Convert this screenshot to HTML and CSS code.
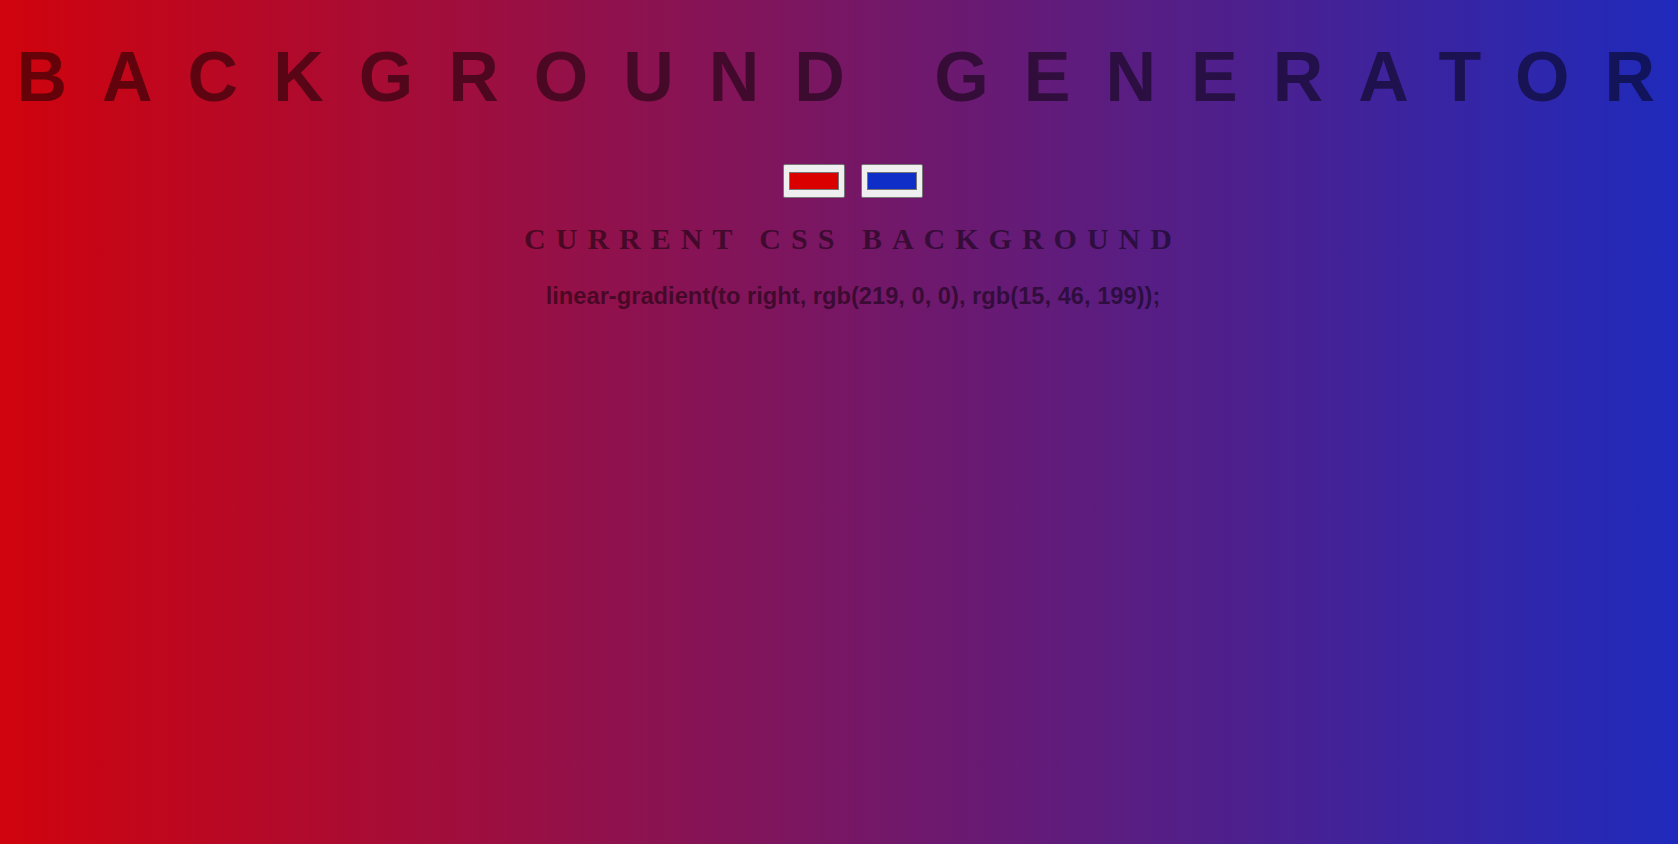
FILE: index.html
```html
<!DOCTYPE html>
<html lang="en">
<head>
<meta charset="utf-8">
<title>Background Generator</title>
<link rel="stylesheet" href="styles.css">
</head>
<body>
  <h1 class="title">Background Generato<span class="last">r</span></h1>
  <main class="panel">
    <div class="pickers">
      <input class="picker" type="color" name="color1" value="#db0000">
      <input class="picker" type="color" name="color2" value="#0f2ec7">
    </div>
    <h2 class="label">Current CSS Backgroun<span class="last">d</span></h2>
    <h3 class="code">linear-gradient(to right, rgb(219, 0, 0), rgb(15, 46, 199));</h3>
  </main>
</body>
</html>
```

FILE: styles.css
```css
html {
  overflow: hidden;
}

body {
  margin: 0;
  min-height: 100vh;
  background: linear-gradient(to right, rgb(208, 3, 13), rgb(31, 42, 187));
  color: rgba(0, 0, 0, 0.5);
}

.title {
  margin: 37px 0 0;
  padding-left: 16.5px;
  font: 700 70px/80px "Liberation Sans", Arial, sans-serif;
  letter-spacing: 35px;
  text-transform: uppercase;
  white-space: nowrap;
  color: rgba(0, 0, 0, 0.5);
}

.last {
  letter-spacing: 0;
}

.panel {
  display: flex;
  flex-direction: column;
  align-items: center;
  padding-left: 28px;
}

.pickers {
  display: flex;
  gap: 16px;
  margin-top: 47px;
}

.picker {
  -webkit-appearance: none;
  appearance: none;
  box-sizing: border-box;
  width: 62px;
  height: 34px;
  margin: 0;
  padding: 1px 2px;
  border: 1px solid #767676;
  border-radius: 2px;
  background: #efefef;
  cursor: pointer;
}

.picker::-webkit-color-swatch-wrapper {
  padding: 6px 3px;
}

.picker::-webkit-color-swatch {
  border: 1px solid #777777;
  border-radius: 0;
}

.label {
  margin: 23px 0 0;
  padding-right: 10px;
  font: 700 30px/36px "Liberation Serif", "Times New Roman", serif;
  letter-spacing: 10px;
  text-transform: uppercase;
  white-space: nowrap;
}

.code {
  margin: 25px 0 0;
  font: 700 23.7px/28px "Liberation Sans", Arial, sans-serif;
  white-space: nowrap;
}
```
